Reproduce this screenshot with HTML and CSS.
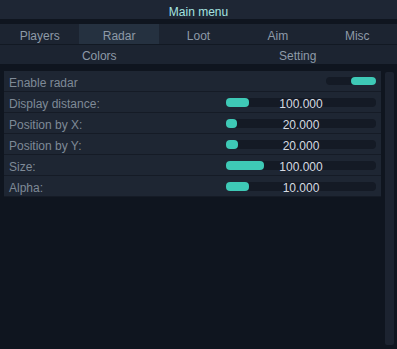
FILE: index.html
```html
<!DOCTYPE html>
<html lang="en">
<head>
  <meta charset="UTF-8">
  <title>Main menu</title>
  <link rel="stylesheet" href="styles.css">
</head>
<body>
  <div class="title">Main menu</div>
  <div class="tabs">
    <div class="tab">Players</div>
    <div class="tab active">Radar</div>
    <div class="tab">Loot</div>
    <div class="tab">Aim</div>
    <div class="tab">Misc</div>
  </div>
  <div class="subtabs">
    <div class="tab">Colors</div>
    <div class="tab">Setting</div>
  </div>
  <div class="content">
    <div class="panel">
      <div class="row">
        <span class="label">Enable radar</span>
        <div class="toggle"><div class="knob"></div></div>
      </div>
      <div class="row">
        <span class="label">Display distance:</span>
        <div class="slider"><div class="fill" style="width: 23px"></div><span class="value">100.000</span></div>
      </div>
      <div class="row">
        <span class="label">Position by X:</span>
        <div class="slider"><div class="fill" style="width: 11px"></div><span class="value">20.000</span></div>
      </div>
      <div class="row">
        <span class="label">Position by Y:</span>
        <div class="slider"><div class="fill" style="width: 12px"></div><span class="value">20.000</span></div>
      </div>
      <div class="row">
        <span class="label">Size:</span>
        <div class="slider"><div class="fill" style="width: 38px"></div><span class="value">100.000</span></div>
      </div>
      <div class="row">
        <span class="label">Alpha:</span>
        <div class="slider"><div class="fill" style="width: 23px"></div><span class="value">10.000</span></div>
      </div>
    </div>
    <div class="scrollbar"></div>
  </div>
</body>
</html>
```

FILE: styles.css
```css
body {
  margin: 0;
  background-color: #0f151f;
  font-family: "Liberation Sans", Arial, sans-serif;
  font-size: 12px;
  width: 397px;
  height: 349px;
  overflow: hidden;
}
.title {
  height: 16px;
  padding-top: 3px;
  line-height: 19px;
  background-color: #1e2634;
  color: #a4e4e0;
  text-align: center;
  margin-bottom: 5px;
}
.tabs {
  display: grid;
  grid-template-columns: repeat(5, 1fr);
  height: 20px;
  background-color: #1c2431;
  border-bottom: 1px solid #121923;
}
.subtabs {
  display: grid;
  grid-template-columns: repeat(2, 1fr);
  height: 19px;
  background-color: #1c2431;
}
.tab {
  color: #8e9aa8;
  text-align: center;
  padding-top: 2px;
  line-height: 20px;
  overflow: hidden;
}
.subtabs .tab {
  line-height: 19px;
}
.tab.active {
  background-color: #253140;
}
.content {
  display: flex;
  align-items: flex-start;
  padding: 7px 3px 0 4px;
  gap: 4px;
}
.panel {
  width: 377px;
  background-color: #1e2633;
}
.row {
  display: flex;
  align-items: center;
  justify-content: space-between;
  height: 20px;
  border-bottom: 1px solid #151b26;
  padding: 0 5px 0 5px;
  color: #7f8a97;
}
.label {
  padding-top: 4px;
}
.toggle {
  width: 50px;
  height: 8px;
  border-radius: 4px;
  background-color: #141a25;
  display: flex;
  justify-content: flex-end;
}
.knob {
  width: 25px;
  height: 8px;
  border-radius: 4px;
  background-color: #3ec9b6;
}
.slider {
  position: relative;
  width: 150px;
  height: 9px;
  border-radius: 4px;
  background-color: #141a25;
}
.fill {
  height: 9px;
  border-radius: 4px;
  background-color: #3ec9b6;
}
.value {
  position: absolute;
  left: 0;
  right: 0;
  top: -1px;
  text-align: center;
  line-height: 14px;
  color: #d6dbe1;
}
.scrollbar {
  width: 9px;
  height: 273px;
  margin-top: 1px;
  background-color: #1c2330;
  border-radius: 2px;
}
```
